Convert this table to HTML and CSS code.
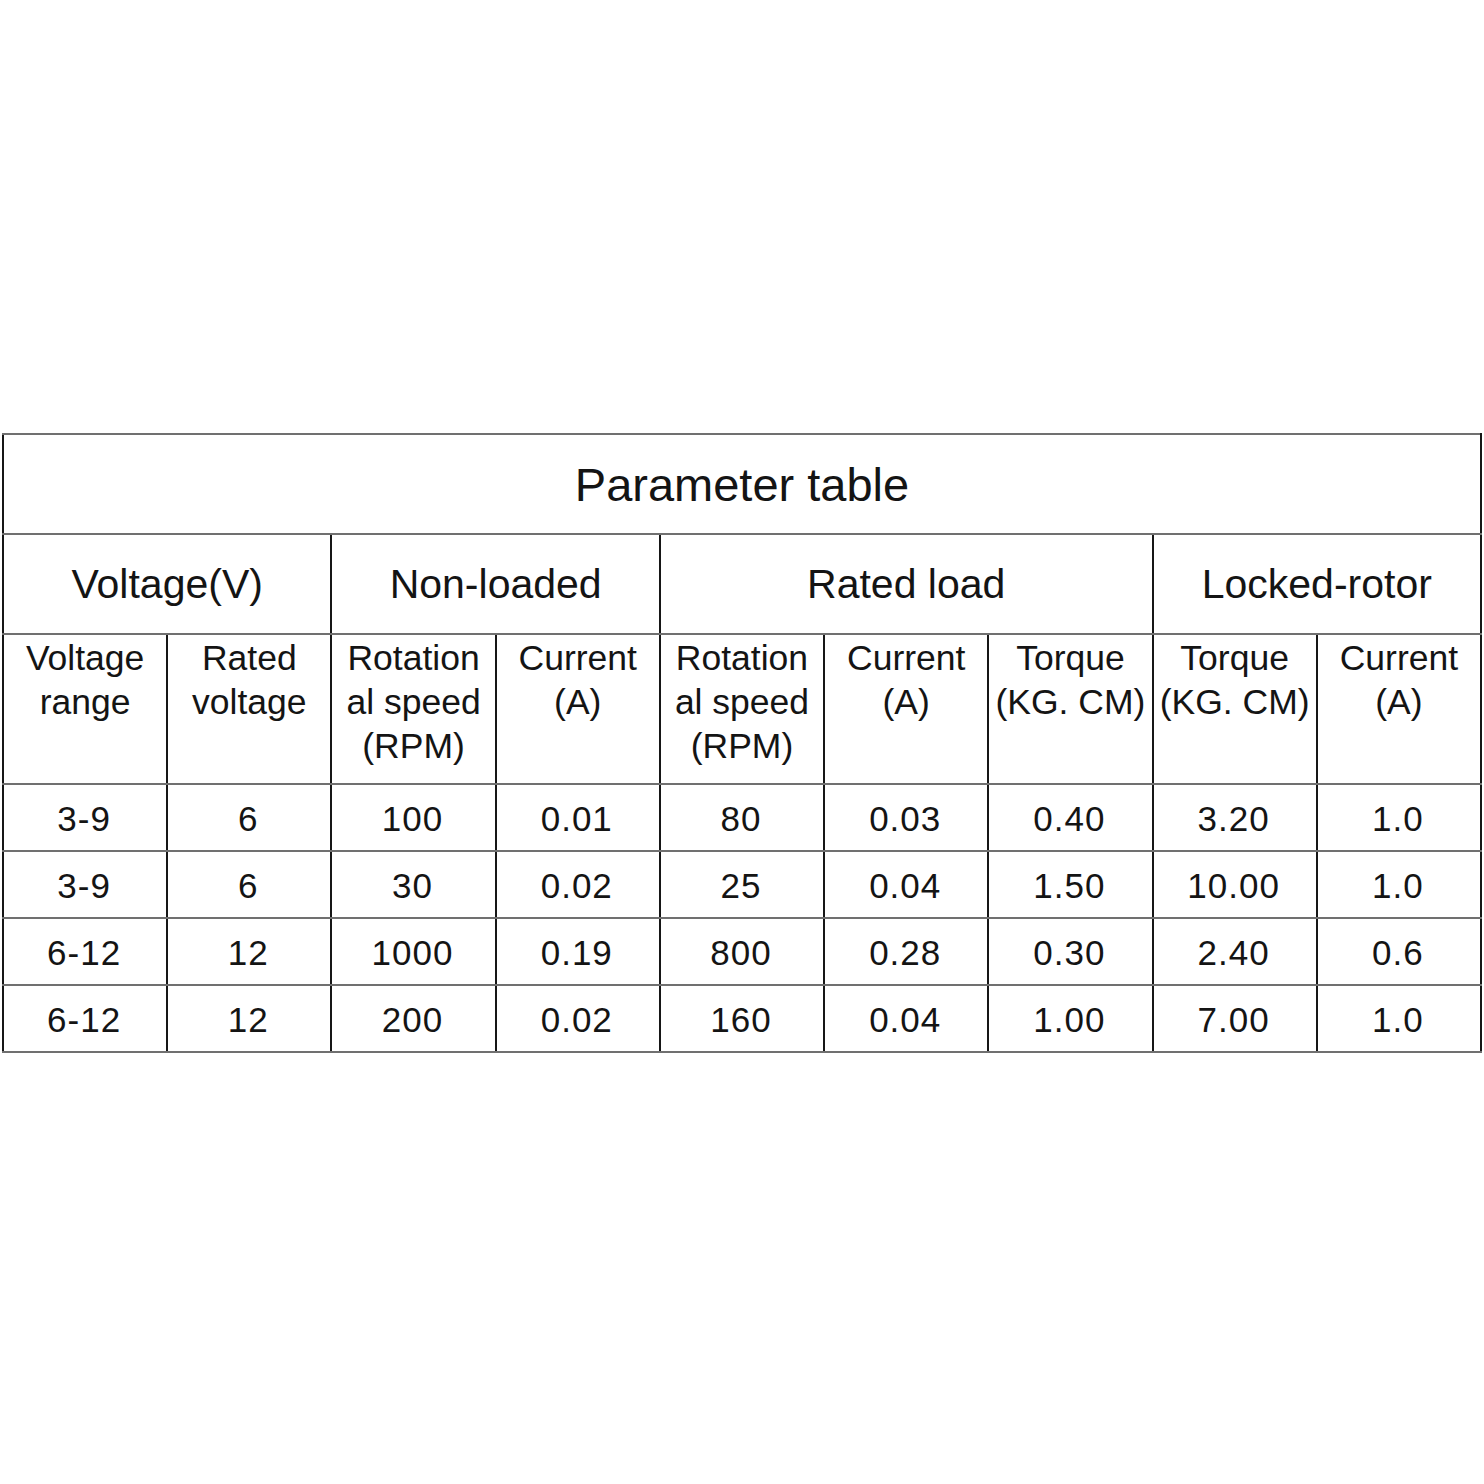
FILE: index.html
```html
<!DOCTYPE html>
<html lang="en">
  <head>
    <meta charset="UTF-8" />
    <meta name="viewport" content="width=device-width, initial-scale=1.0" />
    <title>Parameter table</title>
    <link rel="stylesheet" href="styles.css">
  </head>
  <body>
    <table class="params">
      <tr class="title-row">
        <td colspan="9" class="title">Parameter table</td>
      </tr>
      <tr class="group-row">
        <td colspan="2">Voltage(V)</td>
        <td colspan="2">Non-loaded</td>
        <td colspan="3">Rated load</td>
        <td colspan="2">Locked-rotor</td>
      </tr>
      <tr class="head-row">
        <td>Voltage<br>range</td>
        <td>Rated<br>voltage</td>
        <td>Rotation<br>al speed<br>(RPM)</td>
        <td>Current<br>(A)</td>
        <td>Rotation<br>al speed<br>(RPM)</td>
        <td>Current<br>(A)</td>
        <td>Torque<br>(KG. CM)</td>
        <td>Torque<br>(KG. CM)</td>
        <td>Current<br>(A)</td>
      </tr>
      <tr class="data-row">
        <td>3-9</td><td>6</td><td>100</td><td>0.01</td><td>80</td><td>0.03</td><td>0.40</td><td>3.20</td><td>1.0</td>
      </tr>
      <tr class="data-row">
        <td>3-9</td><td>6</td><td>30</td><td>0.02</td><td>25</td><td>0.04</td><td>1.50</td><td>10.00</td><td>1.0</td>
      </tr>
      <tr class="data-row">
        <td>6-12</td><td>12</td><td>1000</td><td>0.19</td><td>800</td><td>0.28</td><td>0.30</td><td>2.40</td><td>0.6</td>
      </tr>
      <tr class="data-row">
        <td>6-12</td><td>12</td><td>200</td><td>0.02</td><td>160</td><td>0.04</td><td>1.00</td><td>7.00</td><td>1.0</td>
      </tr>
    </table>
  </body>
</html>
```

FILE: styles.css
```css
body {
  margin: 0;
  padding-top: 433px;
  background: #ffffff;
  font-family: "Liberation Sans", Arial, sans-serif;
  color: #141414;
}

.params {
  margin-left: 2px;
  width: 1480px;
  table-layout: fixed;
  border-collapse: collapse;
}

.params td {
  border-top: 2px solid #707070;
  border-bottom: 2px solid #707070;
  border-left: 2px solid #161616;
  border-right: 2px solid #161616;
  text-align: center;
  padding: 0;
}

.title-row {
  height: 100px;
}

.title {
  font-size: 47px;
}

.group-row {
  height: 100px;
}

.group-row td {
  font-size: 41px;
}

.head-row {
  height: 150px;
}

.head-row td {
  font-size: 35.5px;
  line-height: 44px;
  vertical-align: top;
  padding-top: 1px;
}

.data-row {
  height: 67px;
}

.data-row td {
  font-size: 35px;
  letter-spacing: 1px;
  padding-right: 2px;
  padding-top: 3px;
}
```
